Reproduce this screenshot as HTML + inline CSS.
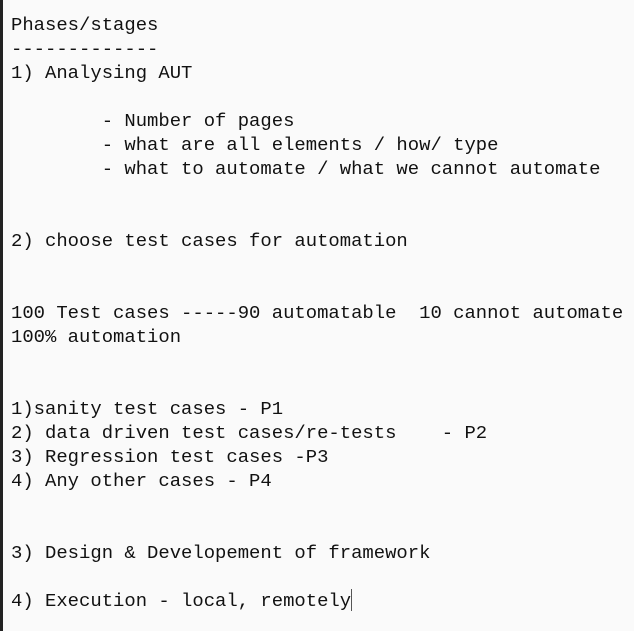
<!DOCTYPE html>
<html><head><style>
html,body{margin:0;padding:0;}
body{width:634px;height:631px;background:#fafafa;overflow:hidden;position:relative;}
.b{position:absolute;left:0;top:0;width:3px;height:631px;background:#222;}
pre{position:absolute;left:11px;top:13px;margin:0;font-family:"Liberation Mono",monospace;font-size:18.9px;line-height:24px;color:#111;}
.c{display:inline-block;width:1px;height:22px;background:#555;vertical-align:-5px;}
</style></head><body><div class="b"></div><pre>Phases/stages
-------------
1) Analysing AUT

        - Number of pages
        - what are all elements / how/ type
        - what to automate / what we cannot automate


2) choose test cases for automation


100 Test cases -----90 automatable  10 cannot automate
100% automation


1)sanity test cases - P1
2) data driven test cases/re-tests    - P2
3) Regression test cases -P3
4) Any other cases - P4


3) Design &amp; Developement of framework

4) Execution - local, remotely<span class="c"></span></pre></body></html>
